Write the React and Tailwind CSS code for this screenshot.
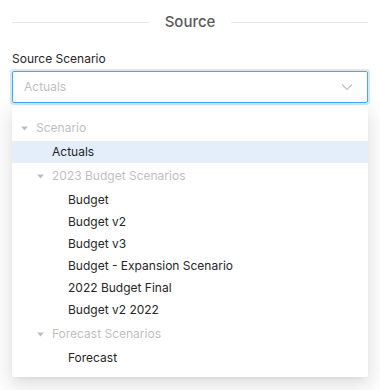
import React from 'react';

const nodes = [
    { label: 'Scenario', level: 0, group: true },
    { label: 'Actuals', level: 1, selected: true },
    { label: '2023 Budget Scenarios', level: 1, group: true },
    { label: 'Budget', level: 2 },
    { label: 'Budget v2', level: 2 },
    { label: 'Budget v3', level: 2 },
    { label: 'Budget - Expansion Scenario', level: 2 },
    { label: '2022 Budget Final', level: 2 },
    { label: 'Budget v2 2022', level: 2 },
    { label: 'Forecast Scenarios', level: 1, group: true },
    { label: 'Forecast', level: 2 },
];

// left padding inside the dropdown, per level
const groupIndents = ['pl-[9px]', 'pl-[25px]'];
const leafIndents = ['pl-[24px]', 'pl-[40px]', 'pl-[56px]'];

const Caret = () => (
    <svg width="7" height="5" viewBox="0 0 7 5" className="mr-[8px] shrink-0">
        <path d="M0 0.5 L7 0.5 L3.5 4.5 Z" fill="#bfbfbf" />
    </svg>
);

const TreeRow = ({ node }) => {
    if (node.group) {
        return (
            <div className={`flex items-center h-[26px] ${groupIndents[node.level]} text-[#bfbfbf]`}>
                <Caret />
                <span>{node.label}</span>
            </div>
        );
    }
    return (
        <div className={`flex items-center h-[22px] ${leafIndents[node.level]} text-[#262626] ${node.selected ? 'bg-[#e3eefa]' : ''}`}>
            {node.label}
        </div>
    );
};

const App = () => {
    return (
        <div className="w-[380px] h-[390px] bg-white px-[12px] pt-[11px] text-[12px] overflow-hidden" style={{ fontFamily: 'Inter, "Noto Sans", sans-serif' }}>
            <div className="flex items-center gap-[16px]">
                <div className="flex-1 h-px bg-[#e8e8e8]" />
                <span className="text-[15px] font-medium text-[#595959] leading-[22px]">Source</span>
                <div className="flex-1 h-px bg-[#e8e8e8]" />
            </div>

            <div className="mt-[17px] text-[#262626] leading-[18px]">Source Scenario</div>

            <div className="mt-[3px] h-[32px] flex items-center justify-between border border-[#40a9ff] rounded-[2px] shadow-[0_0_0_2px_rgba(24,144,255,0.2)] pl-[11px] pr-[14px]">
                <span className="text-[#bfbfbf]">Actuals</span>
                <svg width="12" height="8" viewBox="0 0 12 8" fill="none">
                    <path d="M1 1.5 L6 6.5 L11 1.5" stroke="#bfbfbf" strokeWidth="1.1" />
                </svg>
            </div>

            <div className="mt-[3px] bg-white rounded-[2px] pt-[9px] pb-[8px] shadow-[0_3px_6px_-4px_rgba(0,0,0,0.12),0_6px_16px_0_rgba(0,0,0,0.08),0_9px_28px_8px_rgba(0,0,0,0.05)]">
                {nodes.map((node) => (
                    <TreeRow key={node.label} node={node} />
                ))}
            </div>
        </div>
    );
};

export default App;
